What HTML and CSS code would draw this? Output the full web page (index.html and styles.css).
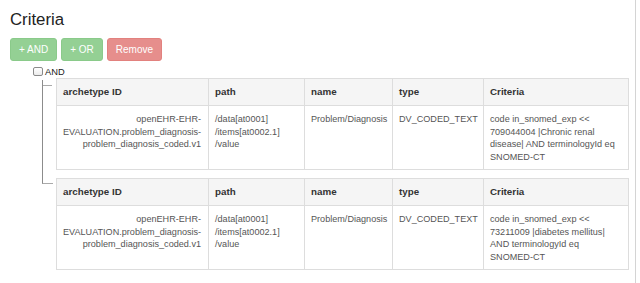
FILE: index.html
```html
<!DOCTYPE html>
<html lang="en">
<head>
  <meta charset="UTF-8" />
  <meta name="viewport" content="width=device-width, initial-scale=1.0">
  <title>Criteria</title>
  <link rel="stylesheet" href="styles.css">
</head>
<body>
  <div class="panel">
    <h3 class="title">Criteria</h3>
    <div class="toolbar">
      <button class="btn btn-success" disabled>+ AND</button>
      <button class="btn btn-success" disabled>+ OR</button>
      <button class="btn btn-danger" disabled>Remove</button>
    </div>

    <div class="group">
      <label class="group-op"><input type="checkbox">AND</label>
      <div class="children">

        <div class="node">
          <table class="crit-table">
            <colgroup>
              <col class="c-arch"><col class="c-path"><col class="c-name"><col class="c-type"><col class="c-crit">
            </colgroup>
            <thead>
              <tr><th>archetype ID</th><th>path</th><th>name</th><th>type</th><th>Criteria</th></tr>
            </thead>
            <tbody>
              <tr>
                <td class="arch">openEHR-EHR-EVALUATION.problem_diagnosis-problem_diagnosis_coded.v1</td>
                <td>/data[at0001]<wbr>/items[at0002.1]<wbr>/value</td>
                <td>Problem/Diagnosis</td>
                <td>DV_CODED_TEXT</td>
                <td>code in_snomed_exp &lt;&lt; 709044004 |Chronic renal disease| AND terminologyId eq SNOMED-CT</td>
              </tr>
            </tbody>
          </table>
        </div>

        <div class="node">
          <table class="crit-table">
            <colgroup>
              <col class="c-arch"><col class="c-path"><col class="c-name"><col class="c-type"><col class="c-crit">
            </colgroup>
            <thead>
              <tr><th>archetype ID</th><th>path</th><th>name</th><th>type</th><th>Criteria</th></tr>
            </thead>
            <tbody>
              <tr>
                <td class="arch">openEHR-EHR-EVALUATION.problem_diagnosis-problem_diagnosis_coded.v1</td>
                <td>/data[at0001]<wbr>/items[at0002.1]<wbr>/value</td>
                <td>Problem/Diagnosis</td>
                <td>DV_CODED_TEXT</td>
                <td>code in_snomed_exp &lt;&lt; 73211009 |diabetes mellitus| AND terminologyId eq SNOMED-CT</td>
              </tr>
            </tbody>
          </table>
        </div>

      </div>
    </div>
  </div>
</body>
</html>
```

FILE: styles.css
```css
html, body {
  margin: 0;
  padding: 0;
  background: #fff;
  font-family: 'Liberation Sans', Arial, sans-serif;
  color: #333;
  overflow: hidden;
}
.panel {
  width: 636px;
  height: 283px;
  border-right: 1px solid #d4d4d4;
  padding: 11px 10px 0;
  box-sizing: border-box;
}
.title {
  margin: 0;
  font-size: 16.8px;
  font-weight: normal;
  line-height: 18px;
  color: #222;
}
.toolbar {
  margin-top: 9px;
  display: flex;
  gap: 4px;
}
.btn {
  font-family: inherit;
  font-size: 10px;
  height: 23px;
  padding: 0 8px;
  border-radius: 3px;
  color: #fff;
  border: 1px solid transparent;
  opacity: 0.65;
}
.btn-success {
  background: #5cb85c;
  border-color: #4cae4c;
}
.btn-danger {
  background: #d9534f;
  border-color: #d43f3a;
}
.group {
  margin-left: 23px;
  margin-top: 4px;
}
.group-op {
  display: flex;
  align-items: center;
  font-size: 9.3px;
  color: #222;
  height: 13px;
}
.group-op input {
  appearance: none;
  margin: 0 2px 0 0;
  width: 10px;
  height: 9px;
  border: 1px solid #8a8a8a;
  border-radius: 2px;
  background: linear-gradient(#fff, #ececec);
  box-sizing: border-box;
}
.children {
  margin-left: 9px;
  margin-top: 0;
}
.node {
  position: relative;
  padding-left: 14px;
  margin-bottom: 8px;
}
.node::before {
  content: '';
  position: absolute;
  left: 0;
  top: 2px;
  width: 9px;
  height: 5px;
  border-left: 1px solid #8c8c8c;
  border-bottom: 1px solid #aaa;
}
.node + .node::before {
  top: -8px;
  height: 13px;
  width: 10px;
}
.node:not(:last-child)::after {
  content: '';
  position: absolute;
  left: 0;
  top: 7px;
  bottom: -8px;
  border-left: 1px solid #8c8c8c;
}
.crit-table {
  width: 572px;
  table-layout: fixed;
  border-collapse: collapse;
}
.c-arch { width: 152px; }
.c-path { width: 96px; }
.c-name { width: 88px; }
.c-type { width: 91px; }
.c-crit { width: 145px; }
.crit-table th,
.crit-table td {
  border: 1px solid #ddd;
  text-align: left;
  vertical-align: top;
  padding: 6px 6px;
}
.crit-table th {
  background: #f5f5f5;
  font-size: 9.8px;
  line-height: 14px;
  font-weight: bold;
  color: #333;
}
.crit-table td {
  font-size: 9.1px;
  line-height: 12.5px;
  color: #555;
  padding-top: 7px;
  padding-bottom: 6px;
}
.crit-table td.arch {
  text-align: right;
  padding-right: 7px;
}
```
